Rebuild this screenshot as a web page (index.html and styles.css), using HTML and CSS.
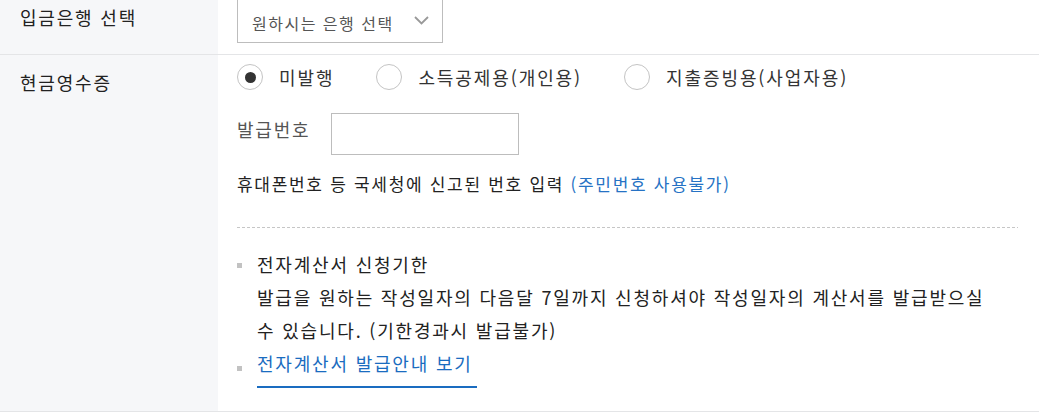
FILE: index.html
```html
<!DOCTYPE html>
<html lang="ko">
<head>
<meta charset="utf-8">
<title>입금은행 선택</title>
<link rel="stylesheet" href="styles.css">
</head>
<body>
<div class="form">
  <div class="row row-bank">
    <div class="th">입금은행 선택</div>
    <div class="td">
      <div class="select">
        <span class="select-text">원하시는 은행 선택</span>
        <svg class="chev" width="15" height="9" viewBox="0 0 15 9"><path d="M1 1 L7.5 7.5 L14 1" fill="none" stroke="#999" stroke-width="1.8"/></svg>
      </div>
    </div>
  </div>
  <div class="row row-receipt">
    <div class="th th-receipt">현금영수증</div>
    <div class="td td-receipt">
      <div class="radios">
        <label class="radio"><span class="circle checked"></span><span class="radio-text">미발행</span></label>
        <label class="radio"><span class="circle"></span><span class="radio-text">소득공제용(개인용)</span></label>
        <label class="radio"><span class="circle"></span><span class="radio-text">지출증빙용(사업자용)</span></label>
      </div>
      <div class="issue">
        <span class="issue-label">발급번호</span>
        <span class="input"></span>
      </div>
      <p class="note">휴대폰번호 등 국세청에 신고된 번호 입력 <span class="blue">(주민번호 사용불가)</span></p>
      <div class="dashed"></div>
      <ul class="info">
        <li class="item">전자계산서 신청기한<br>발급을 원하는 작성일자의 다음달 7일까지 신청하셔야 작성일자의 계산서를 발급받으실<br>수 있습니다. (기한경과시 발급불가)</li>
        <li class="item item-link"><a class="guide" href="#">전자계산서 발급안내 보기</a></li>
      </ul>
    </div>
  </div>
</div>
</body>
</html>
```
FILE: styles.css
```css
* { box-sizing: border-box; }
html, body { margin: 0; padding: 0; background: #fff; }
body {
  font-family: "Noto Sans CJK KR", "Noto Sans", sans-serif;
  color: #222;
  overflow: hidden;
}
.form { margin-top: -12px; }
.row {
  display: grid;
  grid-template-columns: 218px 1fr;
  border-bottom: 1px solid #e4e5e7;
}
.th {
  background: #f6f7f9;
  padding: 17px 0 0 20px;
  font-size: 18px;
  letter-spacing: 1.8px;
  line-height: 24px;
  color: #222;
}
.th-receipt { padding-top: 15px; }
.td { padding: 10px 21px 11px 19px; }
.select {
  width: 206px;
  height: 45px;
  border: 1px solid #bdbdbd;
  display: flex;
  align-items: center;
  justify-content: space-between;
  padding: 4px 13px 0 14px;
}
.select-text {
  font-size: 16px;
  letter-spacing: 1.5px;
  line-height: 20px;
  color: #555;
}
.chev { display: block; margin-top: -5px; }
.td-receipt { padding-top: 9px; padding-bottom: 23px; }
.radios { display: flex; align-items: center; height: 26px; }
.radio { display: flex; align-items: center; margin-right: 42px; }
.circle {
  width: 26px;
  height: 26px;
  border: 1px solid #c4c4c4;
  border-radius: 50%;
  display: flex;
  align-items: center;
  justify-content: center;
}
.circle.checked::after {
  content: "";
  width: 11px;
  height: 11px;
  border-radius: 50%;
  background: #333;
}
.radio-text {
  margin-left: 16px;
  font-size: 18px;
  letter-spacing: 1.9px;
  line-height: 24px;
  color: #333;
}
.issue { display: flex; align-items: flex-start; margin-top: 23px; }
.issue-label {
  font-size: 18px;
  letter-spacing: 1.8px;
  line-height: 24px;
  padding-top: 4px;
  color: #555;
  margin-right: 21px;
}
.input {
  width: 188px;
  height: 42px;
  border: 1px solid #bdbdbd;
  background: #fff;
}
.note {
  margin: 17px 0 0;
  font-size: 17px;
  letter-spacing: 1.7px;
  line-height: 24px;
  color: #222;
}
.blue { color: #2672c4; }
.dashed {
  margin-top: 31px;
  height: 1px;
  background: repeating-linear-gradient(to right, #c6c6c6 0 3px, transparent 3px 5px);
}
.info { list-style: none; margin: 20px 0 0; padding: 0; }
.item {
  position: relative;
  padding-left: 20px;
  font-size: 18px;
  letter-spacing: 1.8px;
  line-height: 33px;
  color: #222;
}
.item::before {
  content: "";
  position: absolute;
  left: 0;
  top: 15px;
  width: 5px;
  height: 5px;
  background: #c2c2c2;
}
.item-link::before { top: 19px; }
.guide {
  display: inline-block;
  color: #1a6cc0;
  text-decoration: none;
  padding-right: 4px;
  padding-bottom: 6px;
  border-bottom: 2px solid #1a6cc0;
}
```
